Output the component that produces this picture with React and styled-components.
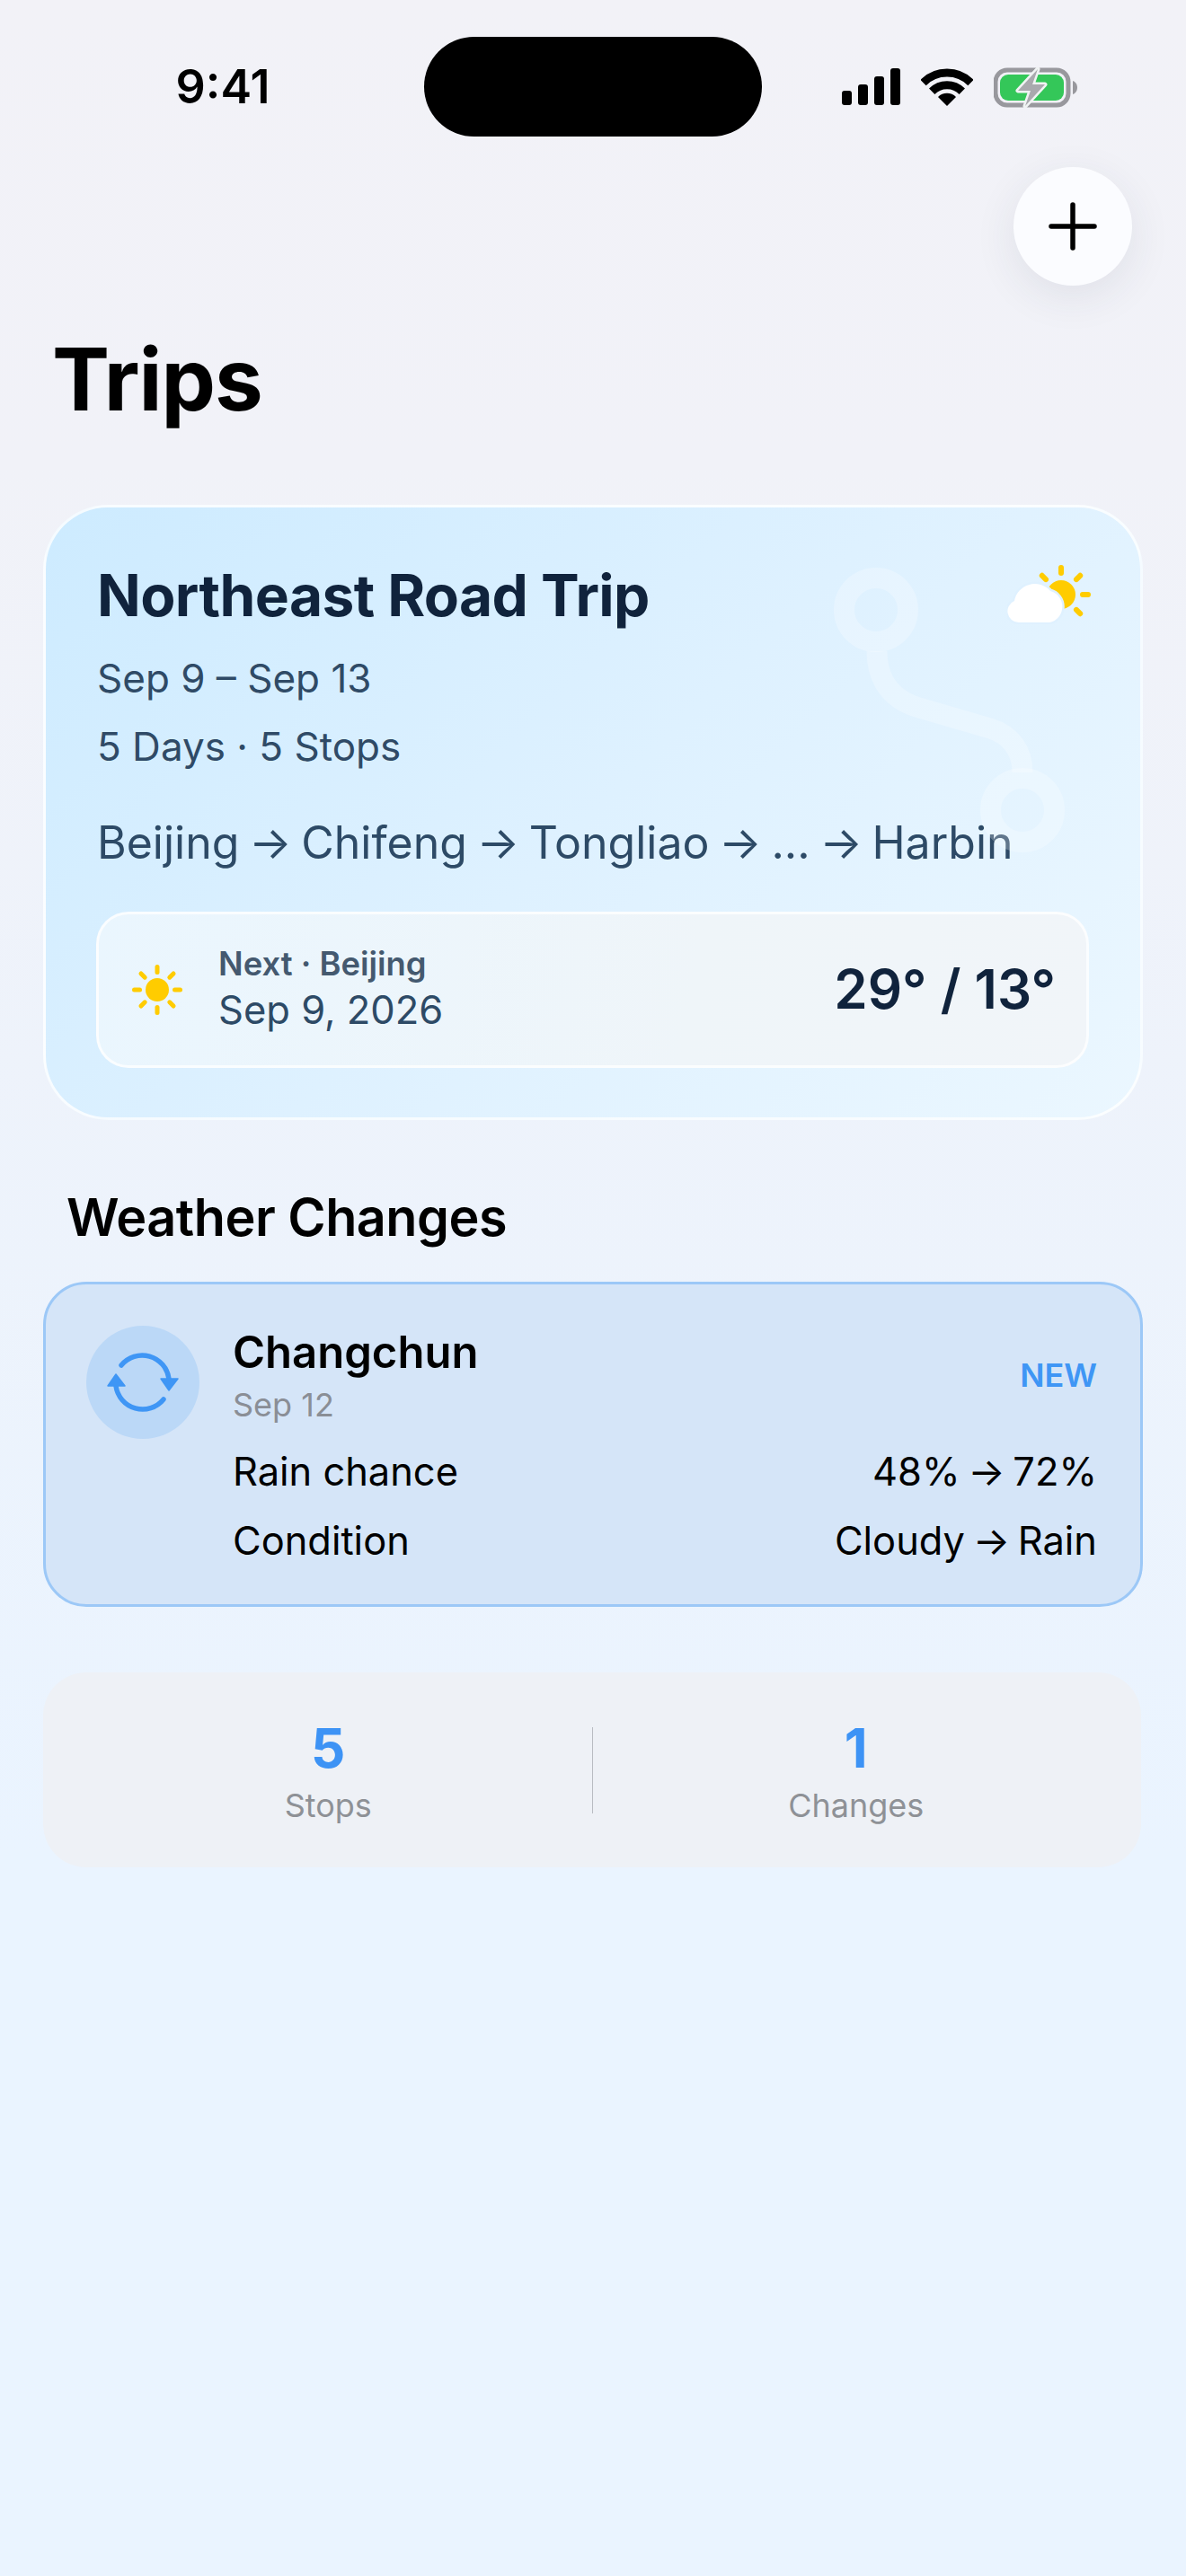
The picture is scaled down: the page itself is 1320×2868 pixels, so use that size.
import React from "react";
import styled, { createGlobalStyle } from "styled-components";

const Global = createGlobalStyle`
  html, body { margin: 0; padding: 0; }
  body { font-family: "Inter", "Liberation Sans", sans-serif; }
`;

const Page = styled.div`
  width: 1320px;
  height: 2868px;
  overflow: hidden;
  background: linear-gradient(180deg, #f2f2f7 0%, #f1f2f8 18%, #eaf4ff 72%, #eaf4ff 100%);
`;

const StatusBar = styled.div`
  display: grid;
  grid-template-columns: 472px 376px 1fr;
  align-items: center;
  padding-top: 41px;
  height: 111px;
`;
const Time = styled.div`
  padding-left: 24px;
  text-align: center;
  font-size: 52px;
  font-weight: 600;
  color: #000;
`;
const Island = styled.div`
  height: 111px;
  background: #000;
  border-radius: 56px;
`;
const StatusIcons = styled.div`
  display: flex;
  align-items: center;
  padding-left: 89px;
  gap: 23px;
`;

const ActionRow = styled.div`
  display: flex;
  justify-content: flex-end;
  padding: 34px 60px 0 0;
`;
const AddButton = styled.div`
  width: 132px;
  height: 132px;
  border-radius: 50%;
  background: #fbfcff;
  display: flex;
  align-items: center;
  justify-content: center;
  box-shadow: 0 12px 48px rgba(40, 50, 80, 0.09);
`;

const Title = styled.h1`
  margin: 46px 0 0 58px;
  font-size: 96px;
  line-height: 116px;
  font-weight: 700;
  letter-spacing: -1px;
  color: #000;
`;

const TripCard = styled.div`
  position: relative;
  box-sizing: border-box;
  margin: 82px 48px 0;
  height: 685px;
  border: 3px solid rgba(255, 255, 255, 0.8);
  border-radius: 72px;
  padding: 60px 57px 0;
  background: linear-gradient(135deg, #cdebff 0%, #def1ff 50%, #ebf7ff 100%);
`;
const TripTitle = styled.div`
  font-size: 64px;
  line-height: 76px;
  font-weight: 700;
  letter-spacing: -0.6px;
  color: #10233c;
`;
const TripMeta = styled.div`
  margin-top: ${(p) => p.$top}px;
  font-size: 44px;
  line-height: 54px;
  color: #2f4a66;
`;
const RouteLine = styled.div`
  margin-top: 50px;
  font-size: 50px;
  line-height: 60px;
  color: #2d4a66;
`;
const Arrow = styled.span`
  margin: 0 -3.5px;
`;
const WeatherCorner = styled.svg`
  position: absolute;
  right: 52px;
  top: 64px;
`;
const RouteMark = styled.svg`
  position: absolute;
  left: 876px;
  top: 67px;
`;

const NextPanel = styled.div`
  display: flex;
  align-items: center;
  box-sizing: border-box;
  height: 174px;
  margin: 47px 0 0 -1px;
  padding: 0 34px 0 37px;
  border: 3px solid rgba(255, 255, 255, 0.75);
  border-radius: 36px;
  background: linear-gradient(100deg, #eaf6fe 0%, #eff5f9 60%, #f1f5f9 100%);
`;
const NextText = styled.div`
  margin-left: 40px;
  padding-bottom: 3px;
  flex: 1;
`;
const NextLabel = styled.div`
  font-size: 36.4px;
  line-height: 44px;
  font-weight: 600;
  color: #44596f;
`;
const NextDate = styled.div`
  margin-top: 2px;
  font-size: 43.5px;
  line-height: 54px;
  color: #2d4a66;
`;
const Temp = styled.div`
  padding-bottom: 3px;
  font-size: 60px;
  font-weight: 600;
  color: #10233c;
`;

const SectionTitle = styled.h2`
  margin: 73px 0 0 74px;
  font-size: 57.5px;
  line-height: 70px;
  font-weight: 600;
  letter-spacing: -0.5px;
  color: #000;
`;

const ChangeCard = styled.div`
  display: flex;
  box-sizing: border-box;
  margin: 37px 48px 0;
  height: 362px;
  padding: 46px 48px 0 45px;
  border: 3px solid #9cc8f7;
  border-radius: 48px;
  background: #d5e5f8;
`;
const ChangeBadge = styled.div`
  flex: none;
  width: 126px;
  height: 126px;
  border-radius: 50%;
  background: #bbd8f7;
  display: flex;
  align-items: center;
  justify-content: center;
`;
const ChangeBody = styled.div`
  flex: 1;
  margin-left: 37px;
`;
const ChangeHead = styled.div`
  display: flex;
  justify-content: space-between;
  align-items: center;
`;
const City = styled.div`
  font-size: 49px;
  line-height: 60px;
  font-weight: 600;
  color: #000;
`;
const ChangeDate = styled.div`
  margin-top: 6px;
  font-size: 36px;
  line-height: 44px;
  color: #8a8e96;
`;
const NewTag = styled.div`
  font-size: 36px;
  font-weight: 600;
  color: #3f96f5;
`;
const ChangeRow = styled.div`
  display: flex;
  justify-content: space-between;
  margin-top: ${(p) => p.$top}px;
  font-size: 43.4px;
  line-height: 54px;
  color: #000;
`;

const StatsCard = styled.div`
  display: flex;
  align-items: center;
  box-sizing: border-box;
  margin: 73px 50px 0 48px;
  height: 217px;
  padding: 3px 24px 0;
  border-radius: 48px;
  background: #eef1f6;
`;
const Stat = styled.div`
  flex: 1;
  text-align: center;
`;
const StatValue = styled.div`
  font-size: 60px;
  line-height: 68px;
  font-weight: 700;
  color: #3d93f5;
`;
const StatLabel = styled.div`
  margin-top: 7px;
  font-size: 36px;
  line-height: 46px;
  color: #8e9196;
`;
const Divider = styled.div`
  width: 1px;
  height: 96px;
  margin-top: -3px;
  background: #b9bcc2;
`;

const Signal = () => (
  <svg width="65" height="41" viewBox="0 0 65 41">
    <rect x="0" y="25" width="11" height="16" rx="3" fill="#000" />
    <rect x="18" y="18" width="11" height="23" rx="3" fill="#000" />
    <rect x="36" y="9" width="11" height="32" rx="3" fill="#000" />
    <rect x="54" y="0" width="11" height="41" rx="3" fill="#000" />
  </svg>
);
const Wifi = () => (
  <svg width="58" height="42" viewBox="0 0 58 42">
    <path d="M2.5 16 A37.5 37.5 0 0 1 55.5 16" fill="none" stroke="#000" strokeWidth="9" />
    <path d="M12.2 25.8 A23.75 23.75 0 0 1 45.8 25.8" fill="none" stroke="#000" strokeWidth="9" />
    <path d="M29 42 L19 32 A14 14 0 0 1 39 32 Z" fill="#000" />
  </svg>
);
const Battery = () => (
  <svg width="93" height="46" viewBox="0 0 93 46">
    <rect x="2" y="4" width="81" height="39" rx="13" fill="none" stroke="#98989d" strokeWidth="5" />
    <rect x="7" y="9" width="71" height="29" rx="9" fill="#34c759" />
    <path d="M88 16 C91 17 93 20 93 23.5 C93 27 91 30 88 31 Z" fill="#98989d" />
    <path d="M49 3 L27 27 L41 27 L35 44 L57 20 L43 20 Z" fill="#a9a9ae" stroke="#f0f3f3" strokeWidth="5" strokeLinejoin="round" paintOrder="stroke" />
  </svg>
);

const Rays = ({ cx, cy, r1, r2, angles, width, color }) =>
  angles.map((a) => {
    const t = (a * Math.PI) / 180;
    return (
      <line
        key={a}
        x1={cx + r1 * Math.cos(t)}
        y1={cy + r1 * Math.sin(t)}
        x2={cx + r2 * Math.cos(t)}
        y2={cy + r2 * Math.sin(t)}
        stroke={color}
        strokeWidth={width}
        strokeLinecap="round"
      />
    );
  });

const PartlyCloudy = () => (
  <WeatherCorner width="96" height="66" viewBox="0 0 96 66">
    <Rays cx={60} cy={33} r1={24} r2={30} angles={[-135, -90, -45, 0, 45]} width={6} color="#ffcc00" />
    <circle cx="60" cy="33" r="16" fill="#ffcc00" />
    <path
      d="M13 64 A12.5 12.5 0 0 1 8 40 A23 23 0 0 1 48 29 A18 18 0 0 1 47 64 Z"
      fill="#fff"
      stroke="#dff1ff"
      strokeWidth="5"
      paintOrder="stroke"
    />
  </WeatherCorner>
);

const Sun = () => (
  <svg width="56" height="56" viewBox="0 0 56 56" style={{ flex: "none" }}>
    <Rays cx={28} cy={28} r1={19.5} r2={25.5} angles={[0, 45, 90, 135, 180, 225, 270, 315]} width={5} color="#ffcc00" />
    <circle cx="28" cy="28" r="13" fill="#ffcc00" />
  </svg>
);

const Plus = () => (
  <svg width="54" height="54" viewBox="0 0 54 54">
    <path d="M27 3 V51 M3 27 H51" fill="none" stroke="#000" strokeWidth="5.5" strokeLinecap="round" />
  </svg>
);

const Sync = () => (
  <svg width="126" height="126" viewBox="0 0 126 126">
    <path d="M39 44 A30 30 0 0 1 92 59" fill="none" stroke="#3f96f5" strokeWidth="5.5" strokeLinecap="round" />
    <path d="M86 82 A30 30 0 0 1 33 67" fill="none" stroke="#3f96f5" strokeWidth="5.5" strokeLinecap="round" />
    <path d="M83 59 L102 59 L92 72 Z" fill="#3f96f5" stroke="#3f96f5" strokeWidth="1.5" strokeLinejoin="round" />
    <path d="M24 67 L43 67 L33 54 Z" fill="#3f96f5" stroke="#3f96f5" strokeWidth="1.5" strokeLinejoin="round" />
  </svg>
);

const Route = () => (
  <RouteMark width="270" height="330" viewBox="0 0 270 330">
    <g fill="none" stroke="#fff" strokeOpacity="0.25" strokeWidth="23">
      <circle cx="48" cy="47" r="35.5" />
      <circle cx="211" cy="270" r="35.5" />
      <path d="M49 93 C49 125 65 147 96 156 L175 179 C198 186 211 204 211 228" />
    </g>
  </RouteMark>
);

export default function App() {
  return (
    <Page>
      <Global />
      <StatusBar>
        <Time>9:41</Time>
        <Island />
        <StatusIcons>
          <Signal />
          <Wifi />
          <Battery />
        </StatusIcons>
      </StatusBar>
      <ActionRow>
        <AddButton>
          <Plus />
        </AddButton>
      </ActionRow>
      <Title>Trips</Title>
      <TripCard>
        <TripTitle>Northeast Road Trip</TripTitle>
        <TripMeta $top={27}>Sep 9 – Sep 13</TripMeta>
        <TripMeta $top={22}>5 Days · 5 Stops</TripMeta>
        <RouteLine>
          Beijing <Arrow>→</Arrow> Chifeng <Arrow>→</Arrow> Tongliao <Arrow>→</Arrow> ... <Arrow>→</Arrow> Harbin
        </RouteLine>
        <PartlyCloudy />
        <Route />
        <NextPanel>
          <Sun />
          <NextText>
            <NextLabel>Next · Beijing</NextLabel>
            <NextDate>Sep 9, 2026</NextDate>
          </NextText>
          <Temp>29° / 13°</Temp>
        </NextPanel>
      </TripCard>
      <SectionTitle>Weather Changes</SectionTitle>
      <ChangeCard>
        <ChangeBadge>
          <Sync />
        </ChangeBadge>
        <ChangeBody>
          <ChangeHead>
            <div>
              <City>Changchun</City>
              <ChangeDate>Sep 12</ChangeDate>
            </div>
            <NewTag>NEW</NewTag>
          </ChangeHead>
          <ChangeRow $top={25}>
            <span>Rain chance</span>
            <span>
              48% <Arrow>→</Arrow> 72%
            </span>
          </ChangeRow>
          <ChangeRow $top={23}>
            <span>Condition</span>
            <span>
              Cloudy <Arrow>→</Arrow> Rain
            </span>
          </ChangeRow>
        </ChangeBody>
      </ChangeCard>
      <StatsCard>
        <Stat>
          <StatValue>5</StatValue>
          <StatLabel>Stops</StatLabel>
        </Stat>
        <Divider />
        <Stat>
          <StatValue>1</StatValue>
          <StatLabel>Changes</StatLabel>
        </Stat>
      </StatsCard>
    </Page>
  );
}
